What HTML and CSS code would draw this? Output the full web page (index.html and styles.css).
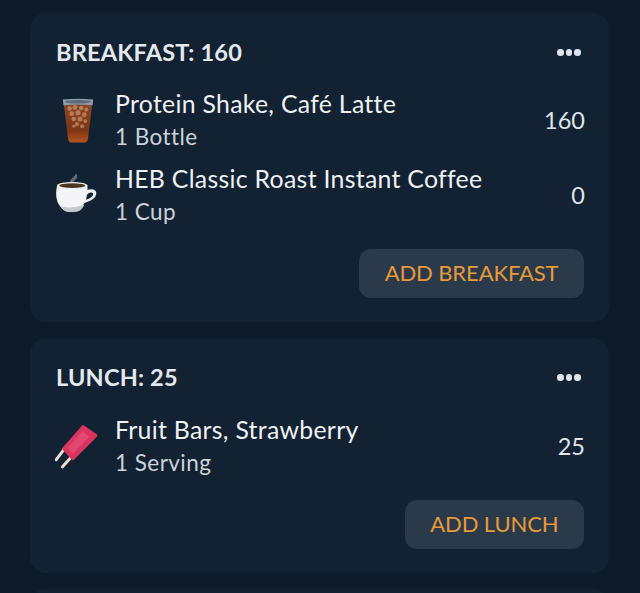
FILE: index.html
```html
<!DOCTYPE html>
<html lang="en">
<head>
<meta charset="utf-8">
<title>Food diary</title>
<link rel="stylesheet" href="styles.css">
</head>
<body>
<main class="page">
  <section class="card">
    <header class="card-head">
      <h2 class="meal-title">BREAKFAST: 160</h2>
      <span class="dots"><i></i><i></i><i></i></span>
    </header>
    <div class="item">
      <svg class="icon" viewBox="0 0 44 44" aria-hidden="true">
        <defs>
          <linearGradient id="tea" x1="0" y1="0" x2="0" y2="1">
            <stop offset="0" stop-color="#8a4a28"/><stop offset="0.7" stop-color="#7d3515"/><stop offset="1" stop-color="#b5531f"/>
          </linearGradient>
        </defs>
        <path d="M8 4h28l-4.500 36q-.4 3.500-3.500 3.500H16q-3.100 0-3.500-3.500z" fill="url(#tea)"/>
        <g fill="#d6a27a" opacity=".6">
          <circle cx="14" cy="11" r="2.200"/><circle cx="19" cy="10" r="2.300"/><circle cx="25" cy="10.500" r="2.200"/><circle cx="30" cy="12" r="2"/>
          <circle cx="16" cy="16" r="2.300"/><circle cx="22" cy="15" r="2.500"/><circle cx="28" cy="17" r="2.300"/>
          <circle cx="18" cy="21" r="2.200"/><circle cx="24" cy="21" r="2.400"/><circle cx="29" cy="23" r="1.800"/>
          <circle cx="21" cy="26" r="2"/><circle cx="26" cy="28" r="2"/><circle cx="18" cy="28" r="1.500"/>
        </g>
        <path d="M7.500 2.500q14.500-1.500 29 0l-.6 5.500q-13.900-1.800-27.800 0z" fill="#93a2b2" opacity=".95"/>
        <ellipse cx="22" cy="4.500" rx="12.500" ry="1.700" fill="#5c6b7c"/>
      </svg>
      <div class="item-text">
        <div class="item-name">Protein Shake, Café Latte</div>
        <div class="item-qty">1 Bottle</div>
      </div>
      <div class="item-cal">160</div>
    </div>
    <div class="item">
      <svg class="icon" viewBox="0 0 44 44" aria-hidden="true">
        <path d="M15 11q-2-2.500 1-4.500t4-5q2.500 2.500 0 5.500t-5 4z" fill="#8c959e" opacity=".65"/>
        <path d="M28 20q2-3.500 6.500-3.500 5.500 0 5 4.500-.7 5.500-12 9l1-3.200q7-1.800 8-5.300.3-2-2-2-2.500 0-3.500 2z" fill="#eceef1"/>
        <path d="M2 13h29q.8 13-5 20-2 3-5 4.500-3 .8-5.500.8t-5.500-.8q-3-1.500-5-4.500-5.800-7-3-20z" fill="#f4f5f7"/>
        <path d="M6 33q3 4.500 8.500 5.300 6 0 8.500-1 3-1.300 5-6-11 4-22 1.700z" fill="#c4c8cf"/>
        <ellipse cx="16.500" cy="13" rx="14.500" ry="3.500" fill="#eef0f2"/>
        <ellipse cx="16.500" cy="13" rx="12.500" ry="2.300" fill="#4b3620"/>
      </svg>
      <div class="item-text">
        <div class="item-name">HEB Classic Roast Instant Coffee</div>
        <div class="item-qty">1 Cup</div>
      </div>
      <div class="item-cal">0</div>
    </div>
    <div class="card-foot"><button class="add-btn" type="button">ADD BREAKFAST</button></div>
  </section>
  <section class="card card-lunch">
    <header class="card-head">
      <h2 class="meal-title">LUNCH: 25</h2>
      <span class="dots"><i></i><i></i><i></i></span>
    </header>
    <div class="item">
      <svg class="icon" viewBox="0 0 44 44" aria-hidden="true">
        <path d="M9.600 24 1 35.200" stroke="#e6e0d6" stroke-width="2.800" stroke-linecap="round"/>
        <path d="M16 32 7 42" stroke="#e6e0d6" stroke-width="2.800" stroke-linecap="round"/>
        <path d="M27 3.500 39 12 17 34 8.500 24.500z" fill="#d8345f" stroke="#d8345f" stroke-width="3" stroke-linejoin="round"/>
        <path d="M26 8 33 13 17 29 12 24z" fill="#ea5079" opacity=".7"/>
      </svg>
      <div class="item-text">
        <div class="item-name">Fruit Bars, Strawberry</div>
        <div class="item-qty">1 Serving</div>
      </div>
      <div class="item-cal">25</div>
    </div>
    <div class="card-foot"><button class="add-btn" type="button">ADD LUNCH</button></div>
  </section>
  <section class="card"></section>
</main>
</body>
</html>
```
FILE: styles.css
```css
* { box-sizing: border-box; }
html, body { margin: 0; height: 100%; }
body {
  background: #0d1a29;
  font-family: Lato, "Noto Sans", sans-serif;
  color: #e6ebf1;
  overflow: hidden;
}
.page {
  height: 593px;
  overflow: hidden;
  padding: 13px 31px 0 30px;
  display: flex;
  flex-direction: column;
  gap: 16px;
}
.card {
  flex: none;
  background: #132232;
  border-radius: 16px;
  padding: 25px 25px 24px 26px;
}
.card:empty { height: 40px; }
.card-head {
  display: flex;
  justify-content: space-between;
  align-items: center;
  height: 28px;
  margin-bottom: 16px;
}
.card-lunch .card-head { margin-bottom: 17px; }
.meal-title {
  margin: 0;
  font-size: 23.500px;
  font-weight: 700;
  line-height: 28px;
  letter-spacing: .2px;
  color: #e4e9ef;
}
.dots { display: flex; gap: 2px; margin: 1px 3px 0 0; }
.dots i {
  width: 6.600px;
  height: 6.600px;
  border-radius: 50%;
  background: #dde4ee;
}
.item {
  display: flex;
  align-items: center;
  height: 75px;
}
.icon { width: 46px; height: 46px; flex: none; margin: 0 14px 0 -1px; }
.item-text { flex: 1; min-width: 0; }
.item-name { font-size: 24.800px; line-height: 33px; color: #eef1f5; letter-spacing: .3px; }
.item-qty { font-size: 22.500px; line-height: 33px; color: #ccd3db; letter-spacing: .45px; }
.item-cal { font-size: 23.500px; color: #dfe4ea; margin-right: -1px; }
.card-foot {
  display: flex;
  justify-content: flex-end;
  margin-top: 17px;
}
.add-btn {
  font: inherit;
  font-size: 22px;
  letter-spacing: -.1px;
  color: #e89a38;
  background: #2b3a4b;
  border: 0;
  border-radius: 12px;
  height: 49px;
  padding: 0 25.500px 2px;
}
```
